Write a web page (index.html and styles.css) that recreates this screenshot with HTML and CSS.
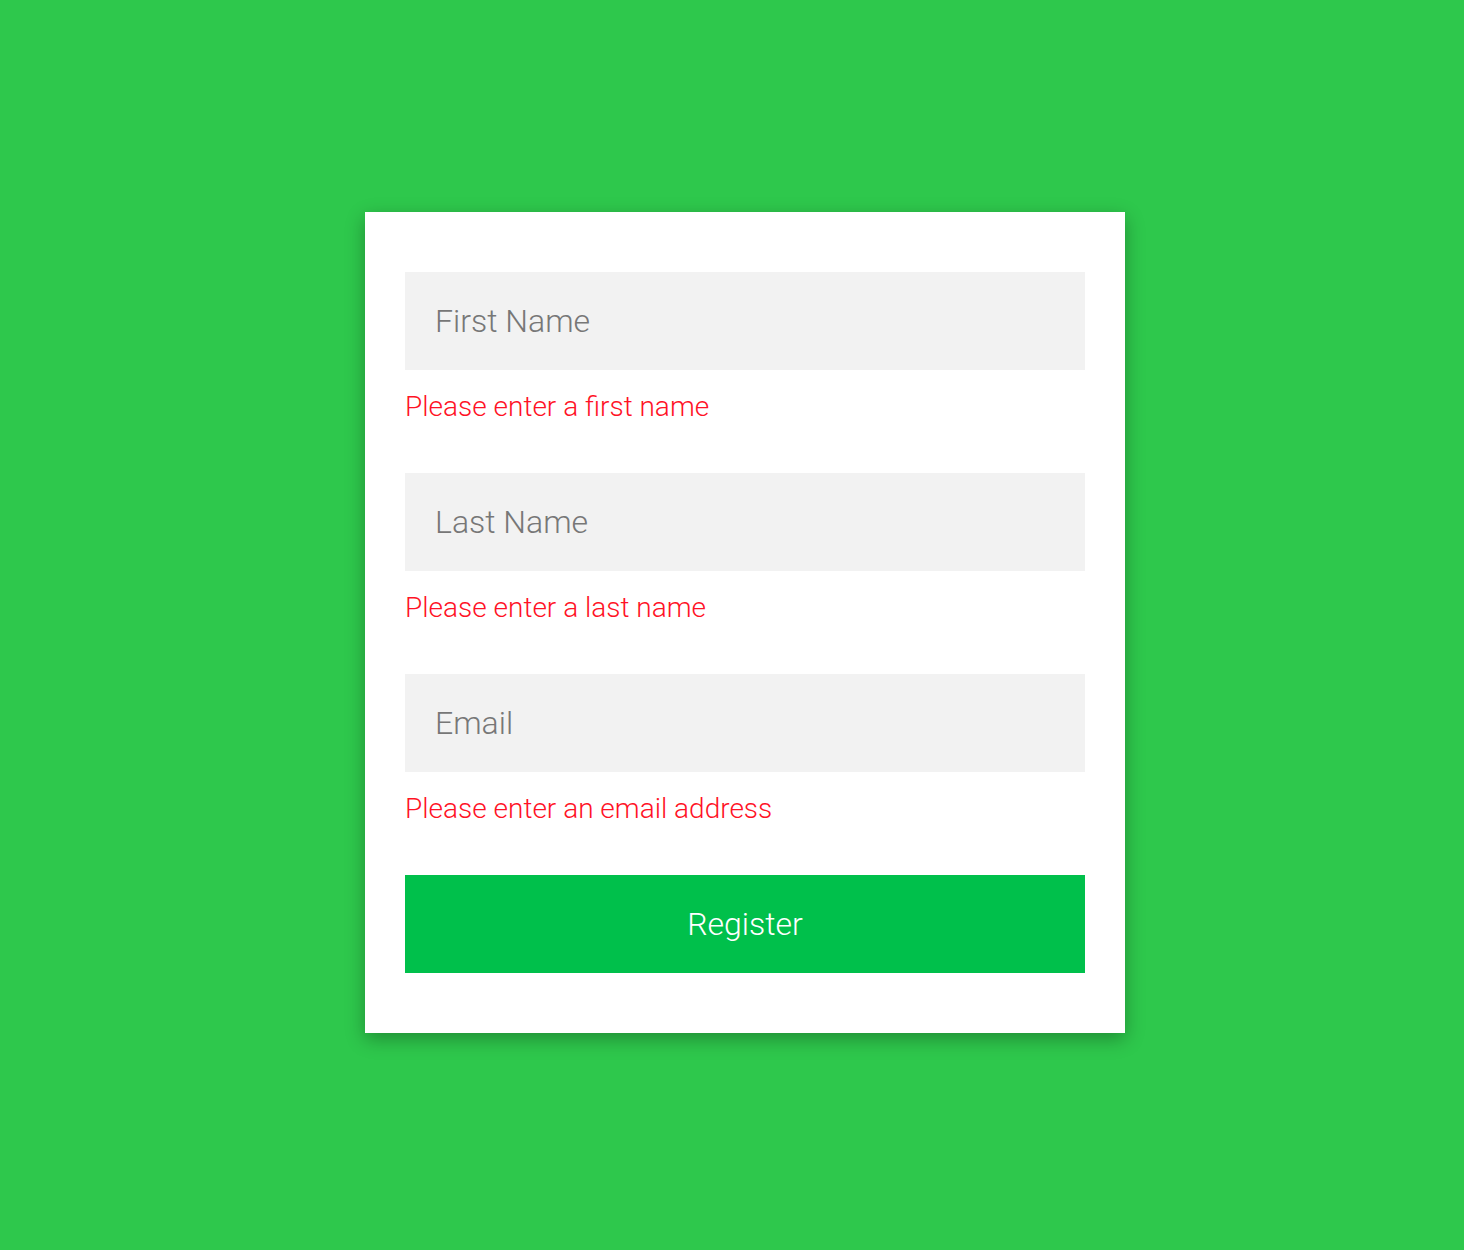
FILE: index.html
```html
<!DOCTYPE html>
<html lang="en">
<head>
    <meta charset="UTF-8">
    <meta name="viewport" content="width=device-width, initial-scale=1.0">
    <title>Register</title>
    <link rel="stylesheet" href="styles.css">
</head>
<body>
    <form class="register-form" novalidate>
        <div class="field">
            <input class="field-input" type="text" placeholder="First Name">
            <p class="field-error">Please enter a first name</p>
        </div>
        <div class="field">
            <input class="field-input" type="text" placeholder="Last Name">
            <p class="field-error">Please enter a last name</p>
        </div>
        <div class="field">
            <input class="field-input" type="email" placeholder="Email">
            <p class="field-error">Please enter an email address</p>
        </div>
        <button class="register-btn" type="submit">Register</button>
    </form>
</body>
</html>
```

FILE: styles.css
```css
* {
    box-sizing: border-box;
    margin: 0;
    padding: 0;
}

body {
    font-family: Roboto, 'Noto Sans', sans-serif;
    font-weight: 300;
    background-color: #2ec84c;
    min-height: 1250px;
    padding: 212px 0 0 26px;
    display: flex;
    justify-content: center;
    align-items: flex-start;
}

.register-form {
    width: 760px;
    background: #fff;
    padding: 60px 40px;
    box-shadow: 0 6px 18px rgba(0, 0, 0, 0.3);
}

.field {
    margin-bottom: 50px;
}

.field-input {
    display: block;
    width: 100%;
    height: 98px;
    border: none;
    outline: none;
    background: #f2f2f2;
    padding: 0 30px;
    font-family: inherit;
    font-weight: 300;
    font-size: 32px;
    color: #555;
}

.field-input::placeholder {
    color: #777;
}

.field-error {
    color: #ff1226;
    font-size: 28px;
    line-height: 32px;
    margin-top: 21px;
}

.register-btn {
    display: block;
    width: 100%;
    height: 98px;
    border: none;
    background: #00c04b;
    color: #fff;
    font-family: inherit;
    font-weight: 300;
    font-size: 32px;
    cursor: pointer;
}
```
